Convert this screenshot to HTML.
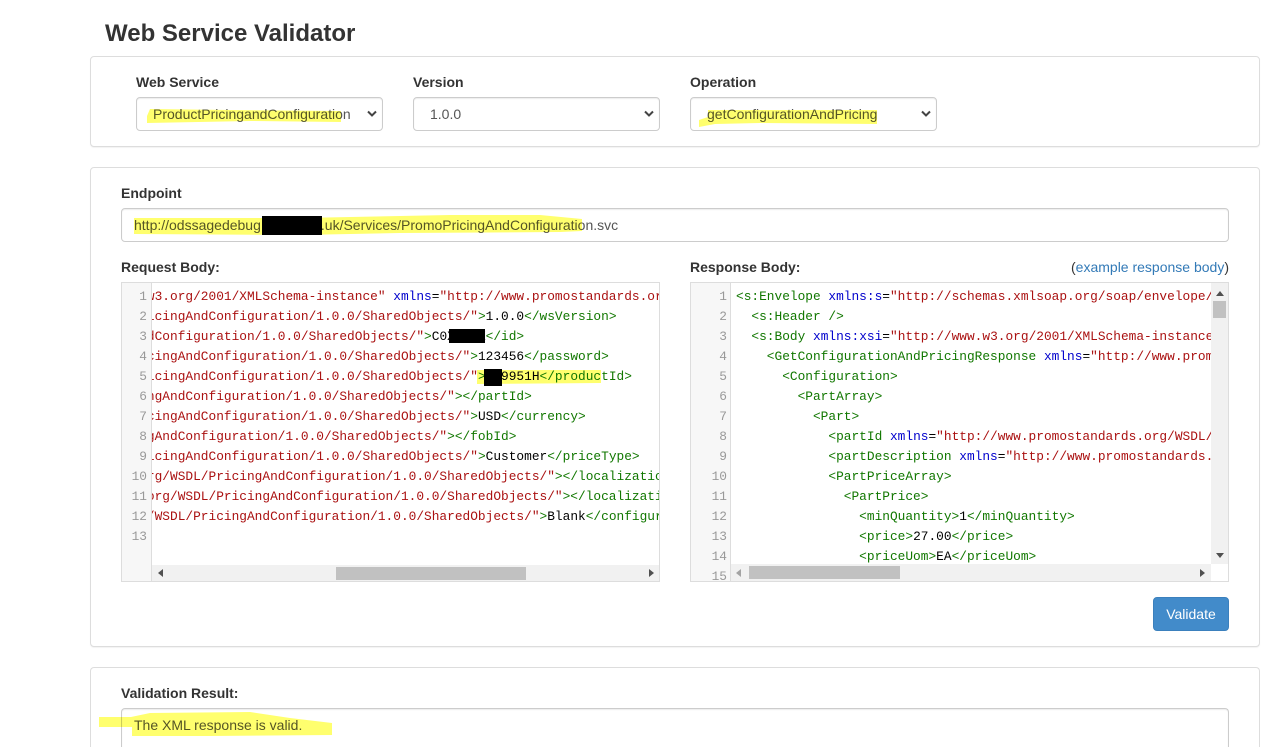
<!DOCTYPE html>
<html><head><meta charset="utf-8"><style>
html,body{margin:0;padding:0;background:#fff;}
html{height:747px;overflow:hidden;}
body{width:1274px;height:747px;overflow:hidden;position:relative;font-family:"Liberation Sans",sans-serif;font-size:14px;color:#333;}
.abs{position:absolute;}
.panel{position:absolute;left:90px;width:1168px;border:1px solid #ddd;border-radius:4px;background:#fff;box-shadow:0 1px 1px rgba(0,0,0,.05);}
.lb{position:absolute;font-weight:bold;font-size:14px;line-height:20px;color:#333;white-space:nowrap;}
.sel{position:absolute;top:97px;width:245px;height:32px;border:1px solid #ccc;border-radius:4px;background:#fff;line-height:32px;color:#555;white-space:nowrap;box-shadow:inset 0 1px 1px rgba(0,0,0,.075);}
.sel span{position:absolute;left:16px;top:0;}
.sel svg{position:absolute;right:4px;top:12px;}
.inp{position:absolute;left:121px;width:1106px;height:32px;border:1px solid #ccc;border-radius:4px;background:#fff;line-height:32px;color:#555;box-shadow:inset 0 1px 1px rgba(0,0,0,.075);white-space:nowrap;}
.inp span{position:absolute;left:12px;top:0;}
.cm{position:absolute;top:282px;height:298px;border:1px solid #ddd;background:#fff;overflow:hidden;font-family:"Liberation Mono",monospace;font-size:12.83px;line-height:20px;}
.gut{position:absolute;left:0;top:0;bottom:0;background:#f7f7f7;border-right:1px solid #ddd;color:#999;text-align:right;}
.gut div{height:20px;}
.code{position:absolute;top:4px;overflow:hidden;height:294px;color:#000;}
.code div{height:20px;white-space:pre;}
.t{color:#170;}.a{color:#00c;}.s{color:#a11;}
.track{position:absolute;background:#f1f1f1;}
.thumb{position:absolute;background:#c1c1c1;}
.tri{position:absolute;width:0;height:0;border-style:solid;border-color:transparent;}
.hl{position:absolute;left:0;top:0;mix-blend-mode:multiply;pointer-events:none;}
.bk{position:absolute;background:#000;}
</style></head><body>

<div class="abs" style="left:105px;top:20px;font-size:24px;line-height:28px;font-weight:bold;color:#333;white-space:nowrap;">Web Service Validator</div>

<div class="panel" style="top:56px;height:89px;"></div>
<div class="lb" style="left:136px;top:72px;">Web Service</div>
<div class="lb" style="left:413px;top:72px;">Version</div>
<div class="lb" style="left:690px;top:72px;">Operation</div>
<div class="sel" style="left:136px;"><span>ProductPricingandConfiguration</span><svg width="12" height="8" viewBox="0 0 12 8"><path d="M2 1.5L6 5.5L10 1.5" fill="none" stroke="#444" stroke-width="2"/></svg></div>
<div class="sel" style="left:413px;"><span>1.0.0</span><svg width="12" height="8" viewBox="0 0 12 8"><path d="M2 1.5L6 5.5L10 1.5" fill="none" stroke="#444" stroke-width="2"/></svg></div>
<div class="sel" style="left:690px;"><span>getConfigurationAndPricing</span><svg width="12" height="8" viewBox="0 0 12 8"><path d="M2 1.5L6 5.5L10 1.5" fill="none" stroke="#444" stroke-width="2"/></svg></div>

<div class="panel" style="top:167px;height:478px;"></div>
<div class="lb" style="left:121px;top:183px;">Endpoint</div>
<div class="inp" style="top:208px;"><span>http://odssagedebug<span style="position:static;display:inline-block;width:60px;"></span>.uk/Services/PromoPricingAndConfiguration.svc</span></div>

<div class="lb" style="left:121px;top:257px;">Request Body:</div>
<div class="lb" style="left:690px;top:257px;">Response Body:</div>
<div class="abs" style="right:45px;top:257px;line-height:20px;color:#333;white-space:nowrap;">(<span style="color:#337ab7;">example response body</span>)</div>

<!-- Left editor -->
<div class="cm" style="left:121px;width:537px;">
  <div class="gut" style="width:25px;padding-right:4px;padding-top:4px;">
    <div>1</div><div>2</div><div>3</div><div>4</div><div>5</div><div>6</div><div>7</div><div>8</div><div>9</div><div>10</div><div>11</div><div>12</div><div>13</div>
  </div>
  <div style="position:absolute;left:30px;top:0;width:507px;height:298px;overflow:hidden;">
    <div class="code" style="left:-5.1px;width:600px;">
<div class="s">w3.org/2001/XMLSchema-instance" <span class="a">xmlns</span><span style="color:#000">=</span>"http://www.promostandards.org/WSDL/</div>
<div><span class="s">icingAndConfiguration/1.0.0/SharedObjects/"</span><span class="t">&gt;</span>1.0.0<span class="t">&lt;/wsVersion&gt;</span></div>
<div><span class="s">dConfiguration/1.0.0/SharedObjects/"</span><span class="t">&gt;</span>C0XXXXX<span class="t">&lt;/id&gt;</span></div>
<div><span class="s">cingAndConfiguration/1.0.0/SharedObjects/"</span><span class="t">&gt;</span>123456<span class="t">&lt;/password&gt;</span></div>
<div><span class="s">icingAndConfiguration/1.0.0/SharedObjects/"</span><span class="t">&gt;</span>XX9951H<span class="t">&lt;/productId&gt;</span></div>
<div><span class="s">ngAndConfiguration/1.0.0/SharedObjects/"</span><span class="t">&gt;&lt;/partId&gt;</span></div>
<div><span class="s">cingAndConfiguration/1.0.0/SharedObjects/"</span><span class="t">&gt;</span>USD<span class="t">&lt;/currency&gt;</span></div>
<div><span class="s">gAndConfiguration/1.0.0/SharedObjects/"</span><span class="t">&gt;&lt;/fobId&gt;</span></div>
<div><span class="s">icingAndConfiguration/1.0.0/SharedObjects/"</span><span class="t">&gt;</span>Customer<span class="t">&lt;/priceType&gt;</span></div>
<div><span class="s">rg/WSDL/PricingAndConfiguration/1.0.0/SharedObjects/"</span><span class="t">&gt;&lt;/localizationCountry&gt;</span></div>
<div><span class="s">org/WSDL/PricingAndConfiguration/1.0.0/SharedObjects/"</span><span class="t">&gt;&lt;/localizationLanguage&gt;</span></div>
<div><span class="s">/WSDL/PricingAndConfiguration/1.0.0/SharedObjects/"</span><span class="t">&gt;</span>Blank<span class="t">&lt;/configurationType&gt;</span></div>
    </div>
  </div>
  <div class="track" style="left:30px;top:282px;width:507px;height:16px;"></div>
  <div class="thumb" style="left:214px;top:284px;width:190px;height:13px;"></div>
  <div class="tri" style="left:36px;top:286px;border-width:4px 5px 4px 0;border-right-color:#505050;"></div>
  <div class="tri" style="left:527px;top:286px;border-width:4px 0 4px 5px;border-left-color:#505050;"></div>
</div>

<!-- Right editor -->
<div class="cm" style="left:690px;width:537px;">
  <div class="gut" style="width:36px;padding-right:3px;padding-top:4px;">
    <div>1</div><div>2</div><div>3</div><div>4</div><div>5</div><div>6</div><div>7</div><div>8</div><div>9</div><div>10</div><div>11</div><div>12</div><div>13</div><div>14</div><div>15</div>
  </div>
  <div style="position:absolute;left:40px;top:0;width:480px;height:298px;overflow:hidden;">
    <div class="code" style="left:5px;width:600px;">
<div><span class="t">&lt;s:Envelope</span> <span class="a">xmlns:s</span>=<span class="s">"http://schemas.xmlsoap.org/soap/envelope/"</span></div>
<div><span class="t">  &lt;s:Header /&gt;</span></div>
<div><span class="t">  &lt;s:Body</span> <span class="a">xmlns:xsi</span>=<span class="s">"http://www.w3.org/2001/XMLSchema-instance"</span></div>
<div><span class="t">    &lt;GetConfigurationAndPricingResponse</span> <span class="a">xmlns</span>=<span class="s">"http://www.promostandards.org/</span></div>
<div><span class="t">      &lt;Configuration&gt;</span></div>
<div><span class="t">        &lt;PartArray&gt;</span></div>
<div><span class="t">          &lt;Part&gt;</span></div>
<div><span class="t">            &lt;partId</span> <span class="a">xmlns</span>=<span class="s">"http://www.promostandards.org/WSDL/</span></div>
<div><span class="t">            &lt;partDescription</span> <span class="a">xmlns</span>=<span class="s">"http://www.promostandards.org/</span></div>
<div><span class="t">            &lt;PartPriceArray&gt;</span></div>
<div><span class="t">              &lt;PartPrice&gt;</span></div>
<div><span class="t">                &lt;minQuantity&gt;</span>1<span class="t">&lt;/minQuantity&gt;</span></div>
<div><span class="t">                &lt;price&gt;</span>27.00<span class="t">&lt;/price&gt;</span></div>
<div><span class="t">                &lt;priceUom&gt;</span>EA<span class="t">&lt;/priceUom&gt;</span></div>
    </div>
  </div>
  <div class="track" style="left:40px;top:281px;width:480px;height:17px;"></div>
  <div class="thumb" style="left:58px;top:283px;width:151px;height:13px;"></div>
  <div class="tri" style="left:45px;top:286px;border-width:4px 5px 4px 0;border-right-color:#a3a3a3;"></div>
  <div class="tri" style="left:509px;top:286px;border-width:4px 0 4px 5px;border-left-color:#505050;"></div>
  <div class="track" style="left:520px;top:0;width:17px;height:281px;"></div>
  <div class="thumb" style="left:522px;top:18px;width:13px;height:17px;"></div>
  <div class="tri" style="left:525px;top:8px;border-width:0 4px 5px 4px;border-bottom-color:#505050;"></div>
  <div class="tri" style="left:525px;top:270px;border-width:5px 4px 0 4px;border-top-color:#505050;"></div>
</div>

<div class="abs" style="left:1153px;top:597px;width:74px;height:32px;border:1px solid #3b80bd;border-radius:4px;background:#428bca;color:#fff;text-align:center;line-height:32px;">Validate</div>

<div class="panel" style="top:667px;height:79px;border-bottom:none;border-bottom-left-radius:0;border-bottom-right-radius:0;box-shadow:none;"></div>
<div class="lb" style="left:121px;top:683px;">Validation Result:</div>
<div class="inp" style="top:708px;height:38px;border-bottom:none;border-bottom-left-radius:0;border-bottom-right-radius:0;"><span>The XML response is valid.</span></div>

<!-- Highlighter -->
<svg class="hl" width="1274" height="747" viewBox="0 0 1274 747">
  <g fill="#ffff6e">
    <path d="M150 109L230 110L341 111L341 122L250 121L147 123L147 116Z"/>
    <path d="M708 110L877 110L877 124L760 123L715 124L699 127L699 120L708 117Z"/>
    <path d="M134 218L300 218L400 216L450 215L540 215L582 219L582 231L560 232L400 233L300 235L134 234Z"/>
    <path d="M477 370L601 370L601 383L477 384Z"/>
    <path d="M99 717L131 717L150 713L250 712L290 718L332 723L332 735L210 736L132 736L132 727L99 727Z"/>
  </g>
</svg>

<!-- Redactions -->
<div class="bk" style="left:262px;top:216px;width:60px;height:19px;"></div>
<div class="bk" style="left:449px;top:329px;width:36px;height:14px;"></div>
<div class="bk" style="left:484px;top:369px;width:18px;height:17px;"></div>

</body></html>
